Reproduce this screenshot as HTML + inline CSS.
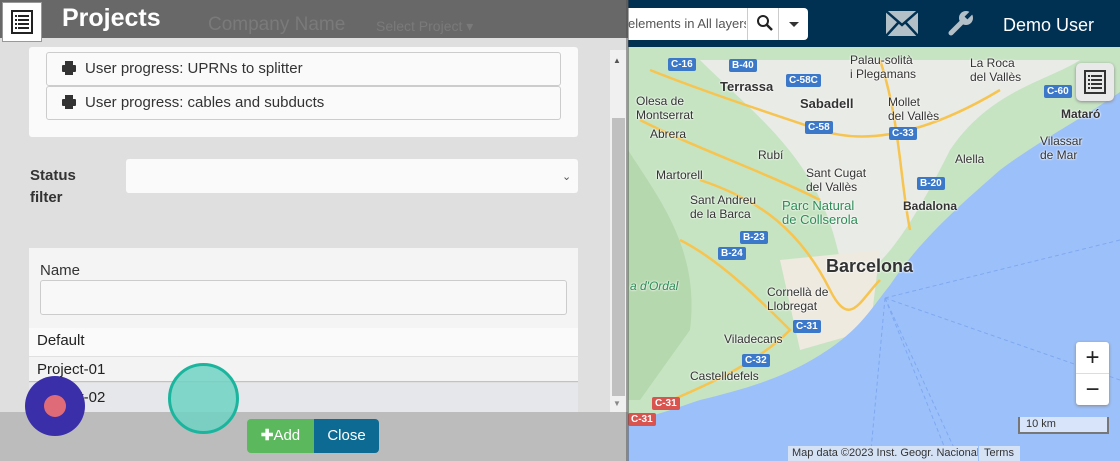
<!DOCTYPE html>
<html><head><meta charset="utf-8"><style>
*{box-sizing:border-box;margin:0;padding:0}
html,body{width:1120px;height:461px;overflow:hidden}
body{position:relative;font-family:"Liberation Sans",sans-serif;background:#e8e8e8}
.abs{position:absolute}
.lbl{position:absolute;font-size:12px;color:#333;line-height:14px;text-shadow:0 0 2px #fff,0 0 2px #fff;white-space:nowrap}
.shield{position:absolute;font-size:10px;font-weight:bold;color:#fff;background:#3b78c9;padding:0 3px;line-height:13px;border-radius:2px}
.red{background:#d9534f}
</style></head><body>
<svg class="abs" style="left:0;top:0" width="1120" height="461">
<rect width="1120" height="461" fill="#e9eee6"/>
<path d="M628 45 L1120 45 L1120 461 L628 461Z" fill="#c6e4c2"/>
<path d="M700 60 C760 120 820 160 840 260 C860 300 900 250 950 150 C990 90 1050 80 1080 60Z" fill="#e9ebe6"/>
<path d="M780 260 L880 250 L870 330 L800 350Z" fill="#eeeae0"/>
<path d="M628 150 C660 200 700 250 690 330 L640 400 L628 400Z" fill="#b5d8ae"/>
<path d="M1120 92 C1080 120 1040 140 1000 170 C960 205 920 240 890 285 C870 310 860 330 820 355 C780 380 740 390 700 400 C670 410 650 418 628 420 L628 461 L1120 461Z" fill="#9cc0f9"/>
<g stroke="#f7c44f" stroke-width="2.5" fill="none">
<path d="M650 70 C700 90 760 110 820 130 C880 150 950 120 1000 90"/>
<path d="M700 180 C760 200 800 230 830 290 C850 330 860 300 880 280"/>
<path d="M680 240 C720 260 760 300 790 330 C760 360 720 380 660 405"/>
<path d="M880 60 C900 120 900 180 910 230"/>
<path d="M640 120 C700 150 760 170 820 200"/>
</g>
<g stroke="#7fa8f0" stroke-width="1" stroke-dasharray="4 3" fill="none">
<path d="M885 298 L1120 240"/><path d="M885 298 L1120 380"/><path d="M885 298 L870 461"/><path d="M885 298 L960 461"/><path d="M885 298 L950 461"/>
</g>
</svg>
<div class="lbl" style="left:850px;top:53px">Palau-solità<br>i Plegamans</div>
<div class="lbl" style="left:970px;top:56px">La Roca<br>del Vallès</div>
<div class="lbl" style="left:720px;top:80px;font-weight:bold;font-size:13px">Terrassa</div>
<div class="lbl" style="left:636px;top:94px">Olesa de<br>Montserrat</div>
<div class="lbl" style="left:800px;top:97px;font-weight:bold;font-size:13px">Sabadell</div>
<div class="lbl" style="left:888px;top:95px">Mollet<br>del Vallès</div>
<div class="lbl" style="left:1061px;top:107px;font-weight:bold">Mataró</div>
<div class="lbl" style="left:650px;top:127px">Abrera</div>
<div class="lbl" style="left:758px;top:148px">Rubí</div>
<div class="lbl" style="left:955px;top:152px">Alella</div>
<div class="lbl" style="left:1040px;top:134px">Vilassar<br>de Mar</div>
<div class="lbl" style="left:656px;top:168px">Martorell</div>
<div class="lbl" style="left:806px;top:166px">Sant Cugat<br>del Vallès</div>
<div class="lbl" style="left:690px;top:193px">Sant Andreu<br>de la Barca</div>
<div class="lbl" style="left:782px;top:199px;color:#2e8b57;font-size:13px">Parc Natural<br>de Collserola</div>
<div class="lbl" style="left:903px;top:199px;font-weight:bold">Badalona</div>
<div class="lbl" style="left:826px;top:256px;font-weight:bold;font-size:18px;line-height:20px">Barcelona</div>
<div class="lbl" style="left:630px;top:279px;color:#2e8b57;font-style:italic">a d'Ordal</div>
<div class="lbl" style="left:767px;top:285px">Cornellà de<br>Llobregat</div>
<div class="lbl" style="left:724px;top:332px">Viladecans</div>
<div class="lbl" style="left:690px;top:369px">Castelldefels</div>
<div class="shield" style="left:668px;top:58px">C-16</div>
<div class="shield" style="left:729px;top:59px">B-40</div>
<div class="shield" style="left:786px;top:74px">C-58C</div>
<div class="shield" style="left:805px;top:121px">C-58</div>
<div class="shield" style="left:889px;top:127px">C-33</div>
<div class="shield" style="left:1044px;top:85px">C-60</div>
<div class="shield" style="left:917px;top:177px">B-20</div>
<div class="shield" style="left:740px;top:231px">B-23</div>
<div class="shield" style="left:718px;top:247px">B-24</div>
<div class="shield" style="left:793px;top:320px">C-31</div>
<div class="shield" style="left:742px;top:354px">C-32</div>
<div class="shield red" style="left:652px;top:397px">C-31</div>
<div class="shield red" style="left:628px;top:413px">C-31</div>
<div class="abs" style="left:1076px;top:63px;width:38px;height:38px;background:#e9e9e9;border-radius:5px;box-shadow:0 1px 3px #888"><svg width="38" height="38"><rect x="9" y="8" width="20" height="22" fill="none" stroke="#333" stroke-width="2"/><g fill="#333"><rect x="12" y="12" width="2" height="2"/><rect x="15" y="12" width="11" height="2"/><rect x="12" y="16" width="2" height="2"/><rect x="15" y="16" width="11" height="2"/><rect x="12" y="20" width="2" height="2"/><rect x="15" y="20" width="11" height="2"/><rect x="12" y="24" width="2" height="2"/><rect x="15" y="24" width="11" height="2"/></g></svg></div>
<div class="abs" style="left:1076px;top:342px;width:33px;height:63px;background:#fff;border-radius:3px;box-shadow:0 1px 3px #888;text-align:center;font-size:24px;line-height:31px;color:#222">+<div style="border-top:1px solid #ddd">−</div></div>
<div class="abs" style="left:1018px;top:417px;width:91px;height:17px;background:#d8e4fa;border:2px solid #777;border-top:none;font-size:11px;padding-left:6px;line-height:15px;color:#333">10 km</div>
<div class="abs" style="left:788px;top:446px;height:15px;background:#d5e2f5;font-size:11px;color:#333;line-height:15px;padding:0 4px;width:190px;white-space:nowrap;overflow:hidden">Map data ©2023 Inst. Geogr. Nacional</div>
<div class="abs" style="left:979px;top:446px;width:41px;height:15px;background:#d5e2f5;font-size:11px;color:#333;line-height:15px;padding-left:5px">Terms</div>
<div class="abs" style="left:628px;top:0;width:492px;height:47px;background:#003152"></div>
<div class="abs" style="left:628px;top:8px;width:180px;height:32px;background:#fff;border-radius:0 4px 4px 0"></div>
<div class="abs" style="left:628px;top:16px;font-size:13px;color:#555;width:118px;overflow:hidden;white-space:nowrap">elements in All layers</div>
<div class="abs" style="left:747px;top:8px;width:1px;height:32px;background:#ccc"></div>
<div class="abs" style="left:778px;top:8px;width:1px;height:32px;background:#ccc"></div>
<svg class="abs" style="left:756px;top:14px" width="18" height="18"><circle cx="7" cy="7" r="5" fill="none" stroke="#222" stroke-width="2"/><path d="M11 11 L16 16" stroke="#222" stroke-width="2.5"/></svg>
<div class="abs" style="left:789px;top:22px;border:5px solid transparent;border-top-color:#333;border-bottom:0"></div>
<svg class="abs" style="left:886px;top:11px" width="32" height="25"><rect width="32" height="25" fill="#b4c0c8"/><path d="M0 0 L16 14 L32 0 M0 25 L12 12 M32 25 L20 12" stroke="#003152" stroke-width="2.5" fill="none"/></svg>
<svg class="abs" style="left:947px;top:9px" width="28" height="28"><path d="M4 24 L16 12" stroke="#b4c0c8" stroke-width="5" stroke-linecap="round"/><circle cx="19" cy="9" r="7" fill="#b4c0c8"/><path d="M19 9 L26 2" stroke="#003152" stroke-width="4"/></svg>
<div class="abs" style="left:1003px;top:15px;font-size:18px;color:#fff">Demo User</div>
<div class="abs" style="left:0;top:0;width:628px;height:461px;background:rgba(222,222,222,0.93)"></div>
<div class="abs" style="left:0;top:0;width:628px;height:38px;background:#686868"></div>
<div class="abs" style="left:208px;top:14px;font-size:19px;color:#7a7a7a">Company Name</div>
<div class="abs" style="left:376px;top:18px;font-size:14px;color:#7a7a7a">Select Project ▾</div>
<div class="abs" style="left:2px;top:2px;width:40px;height:40px;background:#fff;border:1px solid #999"><svg width="38" height="38"><rect x="9" y="8" width="20" height="22" fill="none" stroke="#222" stroke-width="2"/><g fill="#222"><rect x="12" y="12" width="2" height="2"/><rect x="15" y="12" width="11" height="2"/><rect x="12" y="16" width="2" height="2"/><rect x="15" y="16" width="11" height="2"/><rect x="12" y="20" width="2" height="2"/><rect x="15" y="20" width="11" height="2"/><rect x="12" y="24" width="2" height="2"/><rect x="15" y="24" width="11" height="2"/></g></svg></div>
<div class="abs" style="left:62px;top:4px;font-size:25px;font-weight:bold;color:#fff">Projects</div>
<div class="abs" style="left:29px;top:47px;width:549px;height:90px;background:#fafafa;border-radius:3px"></div>
<div class="abs" style="left:46px;top:52px;width:515px;height:34px;background:#fafafa;border:1px solid #ccc;border-radius:3px;font-size:15px;color:#333;line-height:32px;padding-left:38px">User progress: UPRNs to splitter</div>
<div class="abs" style="left:46px;top:86px;width:515px;height:34px;background:#fafafa;border:1px solid #ccc;border-radius:3px;font-size:15px;color:#333;line-height:32px;padding-left:38px">User progress: cables and subducts</div>
<svg class="abs" style="left:61px;top:60px" width="16" height="16"><rect x="4" y="1" width="8" height="4" fill="#333"/><rect x="1" y="5" width="14" height="7" rx="1" fill="#333"/><rect x="4" y="10" width="8" height="5" fill="#333"/></svg>
<svg class="abs" style="left:61px;top:94px" width="16" height="16"><rect x="4" y="1" width="8" height="4" fill="#333"/><rect x="1" y="5" width="14" height="7" rx="1" fill="#333"/><rect x="4" y="10" width="8" height="5" fill="#333"/></svg>
<div class="abs" style="left:30px;top:165px;font-size:15px;font-weight:bold;color:#333;line-height:22px">Status<br>filter</div>
<div class="abs" style="left:126px;top:159px;width:452px;height:34px;background:#fafafa;border-radius:3px"></div>
<div class="abs" style="left:562px;top:170px;font-size:11px;color:#555">⌄</div>
<div class="abs" style="left:29px;top:248px;width:549px;height:80px;background:#f4f4f4"></div>
<div class="abs" style="left:40px;top:262px;font-size:15px;color:#333">Name</div>
<div class="abs" style="left:40px;top:280px;width:527px;height:35px;background:#f8f8f8;border:1px solid #ccc;border-radius:3px"></div>
<div class="abs" style="left:29px;top:328px;width:549px;height:28px;background:#fafafa;font-size:15px;color:#222;line-height:26px;padding-left:8px">Default</div>
<div class="abs" style="left:29px;top:356px;width:549px;height:26px;background:#f3f3f3;border-top:1px solid #e0e0e0;border-bottom:1px solid #aac8e0;font-size:15px;color:#222;line-height:26px;padding-left:8px">Project-01</div>
<div class="abs" style="left:29px;top:383px;width:549px;height:29px;background:#e5e7ea;font-size:15px;color:#222;line-height:30px;padding-left:8px">Project-02</div>
<div class="abs" style="left:610px;top:50px;width:17px;height:362px;background:#f0f0f0"></div>
<div class="abs" style="left:612px;top:118px;width:13px;height:278px;background:#c0c0c0"></div>
<div class="abs" style="left:613px;top:56px;font-size:8px;color:#555">▲</div>
<div class="abs" style="left:613px;top:399px;font-size:8px;color:#888">▼</div>
<div class="abs" style="left:0;top:412px;width:628px;height:49px;background:#bcbcbc"></div>
<div class="abs" style="left:247px;top:419px;width:67px;height:34px;background:#5cb85c;border-radius:4px 0 0 4px;color:#fff;font-size:15px;line-height:34px;text-align:center"><b>✚</b>Add</div>
<div class="abs" style="left:314px;top:419px;width:65px;height:34px;background:#0d6a92;border-radius:0 4px 4px 0;color:#fff;font-size:15px;line-height:34px;text-align:center">Close</div>
<div class="abs" style="left:25px;top:376px;width:60px;height:60px;border-radius:50%;background:#3a2fa8"></div>
<div class="abs" style="left:44px;top:395px;width:22px;height:22px;border-radius:50%;background:#e06b78"></div>
<div class="abs" style="left:168px;top:363px;width:71px;height:71px;border-radius:50%;background:rgba(110,210,195,0.85);border:3px solid #1bb59e"></div>
<div class="abs" style="left:626px;top:0;width:3px;height:461px;background:rgba(80,80,80,0.5)"></div>
</body></html>
